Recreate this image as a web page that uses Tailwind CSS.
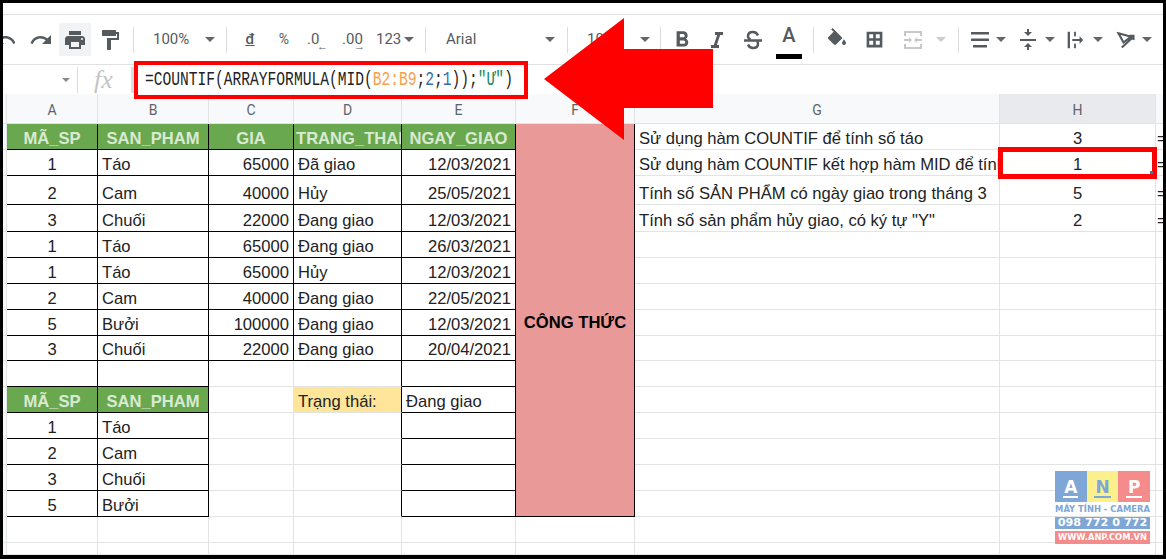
<!DOCTYPE html>
<html lang="en">
<head>
    <meta charset="UTF-8">
    <meta name="viewport" content="width=device-width, initial-scale=1.0">
    <title>COUNTIF ARRAYFORMULA</title>
    <script src="https://cdn.jsdelivr.net/npm/@tailwindcss/browser@4"></script>
</head>
<body class="bg-black">
<div class="relative w-[1166px] h-[559px] overflow-hidden bg-black pt-[3px] pl-[3px] pr-[3px] pb-[4px] font-['Liberation_Sans',sans-serif] text-[#222]">
    <div class="flex flex-col h-full bg-white">
        <!-- menu bar, cut off by the frame -->
        <div class="h-[11px] border-b border-[#e0e0e0] box-content"></div>

        <!-- toolbar -->
        <div class="flex items-center h-[49px] text-[#555a5e] font-['Roboto',sans-serif] text-[15px] whitespace-nowrap">
            <div class="w-[12px] flex justify-end overflow-hidden">
                <svg class="w-6 h-6 shrink-0 -mr-[2px]" viewBox="0 0 24 24" fill="#555a5e"><path d="M12.5 8c-2.65 0-5.05 1-6.9 2.6L2 7v9h9l-3.62-3.62c1.39-1.16 3.16-1.88 5.12-1.88 3.54 0 6.55 2.31 7.6 5.5l2.37-.78C21.08 11.03 17.15 8 12.5 8z"/></svg>
            </div>
            <svg class="w-6 h-6 ml-[14px]" viewBox="0 0 24 24" fill="#555a5e"><path d="M18.4 10.6C16.55 9 14.15 8 11.5 8c-4.65 0-8.58 3.03-9.96 7.22L3.9 16c1.05-3.19 4.05-5.5 7.6-5.5 1.95 0 3.73.72 5.12 1.88L13 16h9V7l-3.6 3.6z"/></svg>
            <div class="flex items-center justify-center w-[32px] h-[33px] ml-[6px] bg-[#f1f3f4]">
                <svg class="w-6 h-6" viewBox="0 0 24 24" fill="#555a5e"><path d="M19 8H5c-1.66 0-3 1.34-3 3v6h4v4h12v-4h4v-6c0-1.66-1.34-3-3-3zm-3 11H8v-5h8v5zm3-7c-.55 0-1-.45-1-1s.45-1 1-1 1 .45 1 1-.45 1-1 1zm-1-9H6v4h12V3z"/></svg>
            </div>
            <svg class="w-6 h-6 ml-[7px]" viewBox="0 0 24 24" fill="#555a5e"><path d="M18 4V3c0-.55-.45-1-1-1H5c-.55 0-1 .45-1 1v4c0 .55.45 1 1 1h12c.55 0 1-.45 1-1V6h1v4H9v11c0 .55.45 1 1 1h2c.55 0 1-.45 1-1v-9h8V4h-3z"/></svg>
            <div class="w-px h-[26px] ml-[11px] bg-[#dadce0]"></div>
            <span class="ml-[19px] w-[36px]">100%</span>
            <div class="ml-[16px] w-0 h-0 border-x-[5px] border-x-transparent border-t-[5px] border-t-[#666]"></div>
            <div class="w-px h-[26px] ml-[11px] bg-[#dadce0]"></div>
            <span class="ml-[17px] w-[12px] text-center font-medium underline">đ</span>
            <span class="ml-[22px] w-[12px] text-center text-[14px]">%</span>
            <span class="ml-[17px] w-[14px] relative">.0<span class="absolute left-[10px] top-[13px] text-[11px] leading-none font-bold">←</span></span>
            <span class="ml-[21px] w-[21px] relative">.00<span class="absolute left-[12px] top-[13px] text-[11px] leading-none font-bold">→</span></span>
            <span class="ml-[13px] w-[24px]">123</span>
            <div class="ml-[4px] w-0 h-0 border-x-[5px] border-x-transparent border-t-[5px] border-t-[#666]"></div>
            <div class="w-px h-[26px] ml-[11px] bg-[#dadce0]"></div>
            <span class="ml-[20px] w-[31px]">Arial</span>
            <div class="ml-[68px] w-0 h-0 border-x-[5px] border-x-transparent border-t-[5px] border-t-[#666]"></div>
            <div class="w-px h-[26px] ml-[12px] bg-[#dadce0]"></div>
            <span class="ml-[19px] w-[18px]">10</span>
            <div class="ml-[35px] w-0 h-0 border-x-[5px] border-x-transparent border-t-[5px] border-t-[#666]"></div>
            <div class="w-px h-[26px] ml-[10px] bg-[#dadce0]"></div>
            <svg class="w-[26px] h-[26px] ml-[8px]" viewBox="0 0 24 24" fill="#555a5e"><path d="M15.6 10.79c.97-.67 1.65-1.77 1.65-2.79 0-2.26-1.75-4-4-4H7v14h7.04c2.09 0 3.71-1.7 3.71-3.79 0-1.52-.86-2.82-2.15-3.42zM10 6.500h3c.83 0 1.500.67 1.500 1.500s-.67 1.500-1.500 1.500h-3v-3zm3.500 9H10v-3h3.500c.83 0 1.500.67 1.500 1.500s-.67 1.500-1.500 1.500z"/></svg>
            <svg class="w-6 h-6 ml-[10px]" viewBox="0 0 24 24" fill="#555a5e"><path d="M10 4v3h2.210l-3.420 10H6v3h8v-3h-2.210l3.420-10H18V4z"/></svg>
            <svg class="w-6 h-6 ml-[12px]" viewBox="0 0 24 24" fill="none" stroke="#555a5e" stroke-width="2.500"><path d="M17 7.500C16 5 14 4 12 4 9 4 7 5.500 7 8c0 1.500.8 2.800 2.500 3.500M7 16.500C8 19 10 20 12 20c3 0 5-1.500 5-4 0-1-.4-2-1-2.500M3 12.500h18"/></svg>
            <div class="relative ml-[11px] w-[26px] h-[36px] flex justify-center">
                <span class="text-[20px] leading-[26px] font-medium">A</span>
                <div class="absolute left-0 bottom-[-1px] w-[26px] h-[5px] bg-black"></div>
            </div>
            <div class="w-px h-[26px] ml-[11px] bg-[#dadce0]"></div>
            <svg class="w-6 h-6 ml-[11px]" viewBox="0 0 24 24" fill="#555a5e"><path d="M16.56 8.94L7.62 0 6.21 1.41l2.38 2.38-5.15 5.15c-.59.59-.59 1.54 0 2.12l5.5 5.5c.29.29.68.44 1.06.44s.77-.15 1.06-.44l5.5-5.5c.59-.58.59-1.53 0-2.12zM19 11.500s-2 2.170-2 3.500c0 1.100.9 2 2 2s2-.9 2-2c0-1.330-2-3.500-2-3.500z"/></svg>
            <svg class="w-[21px] h-[21px] ml-[15px]" viewBox="0 0 24 24" fill="none" stroke="#555a5e" stroke-width="3"><path d="M4.500 4.500h15v15h-15zM12 4.500v15M4.500 12h15"/></svg>
            <svg class="w-6 h-6 ml-[16px]" viewBox="0 0 24 24" fill="#c8c8c8"><path d="M3 3h18v5h-2V5H5v3H3zM3 16h2v3h14v-3h2v5H3zM3 11h5V9l3 3-3 3v-2H3zM21 13h-5v2l-3-3 3-3v2h5z"/></svg>
            <div class="ml-[11px] w-0 h-0 border-x-[5px] border-x-transparent border-t-[5px] border-t-[#ccc]"></div>
            <div class="w-px h-[26px] ml-[12px] bg-[#dadce0]"></div>
            <svg class="w-6 h-6 ml-[9px]" viewBox="0 0 24 24" fill="#555a5e"><path d="M3 4h18v2.500H3zM3 10.500h18v2.500H3zM5 17h14v2.500H5z"/></svg>
            <div class="ml-[4px] w-0 h-0 border-x-[5px] border-x-transparent border-t-[5px] border-t-[#666]"></div>
            <svg class="w-6 h-6 ml-[10px]" viewBox="0 0 24 24" fill="#555a5e"><path d="M8 19h3v3h2v-3h3l-4-4-4 4zm8-15h-3V1h-2v3H8l4 4 4-4zM4 11v2h16v-2H4z"/></svg>
            <div class="ml-[5px] w-0 h-0 border-x-[5px] border-x-transparent border-t-[5px] border-t-[#666]"></div>
            <svg class="w-[22px] h-[22px] ml-[9px]" viewBox="0 0 24 24" fill="#555a5e"><path d="M4 3h2.500v18H4zM11 3h2v5h-2zM11 16h2v5h-2zM9 11h8V8l4 4-4 4v-3H9z"/></svg>
            <div class="ml-[7px] w-0 h-0 border-x-[5px] border-x-transparent border-t-[5px] border-t-[#666]"></div>
            <svg class="w-5 h-5 ml-[13px]" viewBox="0 0 24 24" fill="none" stroke="#555a5e" stroke-width="2.500"><path d="M3 4l15 4-9 7zM7 21L21 8M16 7h5v5"/></svg>
            <div class="ml-[6px] w-0 h-0 border-x-[5px] border-x-transparent border-t-[5px] border-t-[#666]"></div>
        </div>

        <!-- formula bar -->
        <div class="flex items-center h-[30px] border-t border-[#e0e0e0]">
            <div class="ml-[59px] w-0 h-0 border-x-[4px] border-x-transparent border-t-[4px] border-t-[#888]"></div>
            <div class="w-px h-[26px] ml-[7px] bg-[#dadce0]"></div>
            <span class="ml-[16px] w-[20px] font-['Liberation_Serif',serif] italic text-[26px] leading-none text-[#c4c4c4]">fx</span>
            <div class="w-[3px] h-[26px] ml-[17px] bg-[#dadce0]"></div>
            <div class="ml-[11px] mt-[3px] scale-y-[1.35] font-['Liberation_Mono',monospace] text-[14.6px] whitespace-nowrap">=COUNTIF(ARRAYFORMULA(MID(<span class="text-[#f6a04d]">B2:B9</span>;<span class="text-[#2f6fb0]">2</span>;<span class="text-[#2f6fb0]">1</span>));<span class="text-[#0f8a5f]">"Ư"</span>)</div>
        </div>

        <!-- sheet -->
        <div id="sheet" class="grid flex-1 overflow-hidden text-[16.6px] leading-none grid-cols-[4px_91px_111px_85px_108px_114px_119px_365px_156px_8px] grid-rows-[30px_26px_26px_29px_27px_26px_26px_26px_26px_25px_26px_26px_26px_26px_26px_26px_26px_12px]">
            <div class="col-start-7 row-start-2 row-span-15 flex items-center justify-center pt-[7px] bg-[#ea9999] border-r border-b border-black font-bold text-black">CÔNG THỨC</div>
        </div>
    </div>

    <!-- overlays drawn on top of the screenshot -->
    <div class="absolute left-[134px] top-[61px] w-[394px] h-[38px] border-4 border-[#f00]"></div>
    <div class="absolute left-[998px] top-[147px] w-[159px] h-[32px] border-[5px] border-[#f00]"></div>
    <div class="absolute left-[1150px] top-[171px] w-[3px] h-[3px] bg-[#3b78c4]"></div>
    <svg class="absolute left-[544px] top-[18px]" width="170" height="122" viewBox="0 0 170 122"><path d="M0 61L80 0V31H169V90H80V122Z" fill="#f00"/></svg>

    <!-- ANP logo -->
    <div class="absolute left-[1055px] top-[471px] w-[95px] font-['DejaVu_Sans',sans-serif] font-bold text-white">
        <div class="flex h-[31px] text-[17px]">
            <div class="flex-1 flex justify-center items-center bg-[#7ea6d6]"><span class="border-b-2 border-white leading-[18px] px-[1px] mt-[2px]">A</span></div>
            <div class="flex-1 flex justify-center items-center bg-[#fbf08c] text-[#7ea6d6]"><span class="border-b-2 border-[#7ea6d6] leading-[18px] px-[1px] mt-[2px]">N</span></div>
            <div class="flex-1 flex justify-center items-center bg-[#f58b8b]"><span class="border-b-2 border-white leading-[18px] px-[2px] mt-[2px]">P</span></div>
        </div>
        <div class="h-[15px] text-[8.400px] leading-[15px] text-[#7ea6d6] whitespace-nowrap text-center">MÁY TÍNH - CAMERA</div>
        <div class="h-[12px] bg-[#7ea6d6] text-[11.200px] leading-[12px] text-center whitespace-nowrap">098 772 0 772</div>
        <div class="h-[13px] mt-[2px] bg-[#f58b8b] text-[8.300px] leading-[13px] text-center whitespace-nowrap">WWW.ANP.COM.VN</div>
    </div>
</div>
<script>
    const sheet = document.getElementById('sheet');

    // r, b = black right/bottom border of the cell
    function addCell(text, extra, r, b) {
        const cell = document.createElement('div');
        const rightBorder = r ? 'border-r-black' : 'border-r-[#e2e3e3]';
        const bottomBorder = b ? 'border-b-black' : 'border-b-[#e2e3e3]';
        cell.className = `flex overflow-hidden whitespace-nowrap border-r border-b ${rightBorder} ${bottomBorder} ${extra}`;
        cell.textContent = text;
        sheet.appendChild(cell);
    }
    // Sheets puts text at the bottom of the row
    function bodyCell(text, extra, r, b) {
        addCell(text, 'items-end pb-[1px] px-[4px] ' + extra, r, b);
    }

    const colHead = "items-end pb-[6px] justify-center bg-[#f8f9fa] text-[14px] text-[#5f6368] font-['Roboto',sans-serif]";
    const colHeadOn = "items-end pb-[6px] justify-center bg-[#e8eaed] text-[14px] text-[#5f6368] font-['Roboto',sans-serif]";
    ['', 'A', 'B', 'C', 'D', 'E', 'F', 'G', 'H', ''].forEach((name, i) => {
        addCell(name, i === 8 ? colHeadOn : colHead, false, false);
    });

    const center = 'justify-center';
    const right = 'justify-end';
    const green = 'justify-center bg-[#6aa84f] text-[#d9ead3] font-bold';

    const table1 = [
        [1, 'Táo', 65000, 'Đã giao', '12/03/2021'],
        [2, 'Cam', 40000, 'Hủy', '25/05/2021'],
        [3, 'Chuối', 22000, 'Đang giao', '12/03/2021'],
        [1, 'Táo', 65000, 'Đang giao', '26/03/2021'],
        [1, 'Táo', 65000, 'Hủy', '12/03/2021'],
        [2, 'Cam', 40000, 'Đang giao', '22/05/2021'],
        [5, 'Bưởi', 100000, 'Đang giao', '12/03/2021'],
        [3, 'Chuối', 22000, 'Đang giao', '20/04/2021'],
    ];
    const list = [[1, 'Táo'], [2, 'Cam'], [3, 'Chuối'], [5, 'Bưởi']];
    const notes = [
        ['Sử dụng hàm COUNTIF để tính số táo', 3],
        ['Sử dụng hàm COUNTIF kết hợp hàm MID để tính', 1],
        ['Tính số SẢN PHẨM có ngày giao trong tháng 3', 5],
        ['Tính số sản phẩm hủy giao, có ký tự "Y"', 2],
    ];

    function rowHead() {
        addCell('', 'bg-[#f8f9fa]', false, false);
    }
    function rightSide(i) {
        const note = notes[i] || ['', ''];
        bodyCell(note[0], '', false, false);
        bodyCell(note[1], center, false, false);
        addCell(note[0] ? '=' : '', 'items-end pb-[1px] pl-[1px]', false, false);
    }

    // header row of the first table
    rowHead();
    ['MÃ_SP', 'SAN_PHAM', 'GIA'].forEach(t => bodyCell(t, green, true, true));
    addCell('TRANG_THAI', 'items-end pb-[1px] pl-[2px] bg-[#6aa84f] text-[#d9ead3] font-bold', true, true);
    bodyCell('NGAY_GIAO', green, true, true);
    rightSide(0);

    table1.forEach((row, i) => {
        rowHead();
        bodyCell(row[0], center, true, true);
        bodyCell(row[1], '', true, true);
        bodyCell(row[2], right, true, true);
        bodyCell(row[3], '', true, true);
        bodyCell(row[4], right, true, true);
        rightSide(i + 1);
    });

    // gap row between the tables
    rowHead();
    bodyCell('', '', true, true);
    bodyCell('', '', true, true);
    bodyCell('', '', false, false);
    bodyCell('', '', true, false);
    bodyCell('', '', true, true);
    rightSide(9);

    // second table with the status filter next to it
    rowHead();
    bodyCell('MÃ_SP', green, true, true);
    bodyCell('SAN_PHAM', green, true, true);
    bodyCell('', '', false, false);
    bodyCell('Trạng thái:', 'bg-[#ffe599]', true, false);
    bodyCell('Đang giao', '', true, true);
    rightSide(10);

    list.forEach((row, i) => {
        rowHead();
        bodyCell(row[0], center, true, true);
        bodyCell(row[1], '', true, true);
        bodyCell('', '', false, false);
        bodyCell('', '', true, false);
        bodyCell('', '', true, true);
        rightSide(11 + i);
    });

    // empty rows below, across all the columns
    for (let r = 0; r < 2; r++) {
        for (let c = 0; c < 10; c++) {
            addCell('', c === 0 ? 'bg-[#f8f9fa]' : '', false, false);
        }
    }
</script>
</body>
</html>
